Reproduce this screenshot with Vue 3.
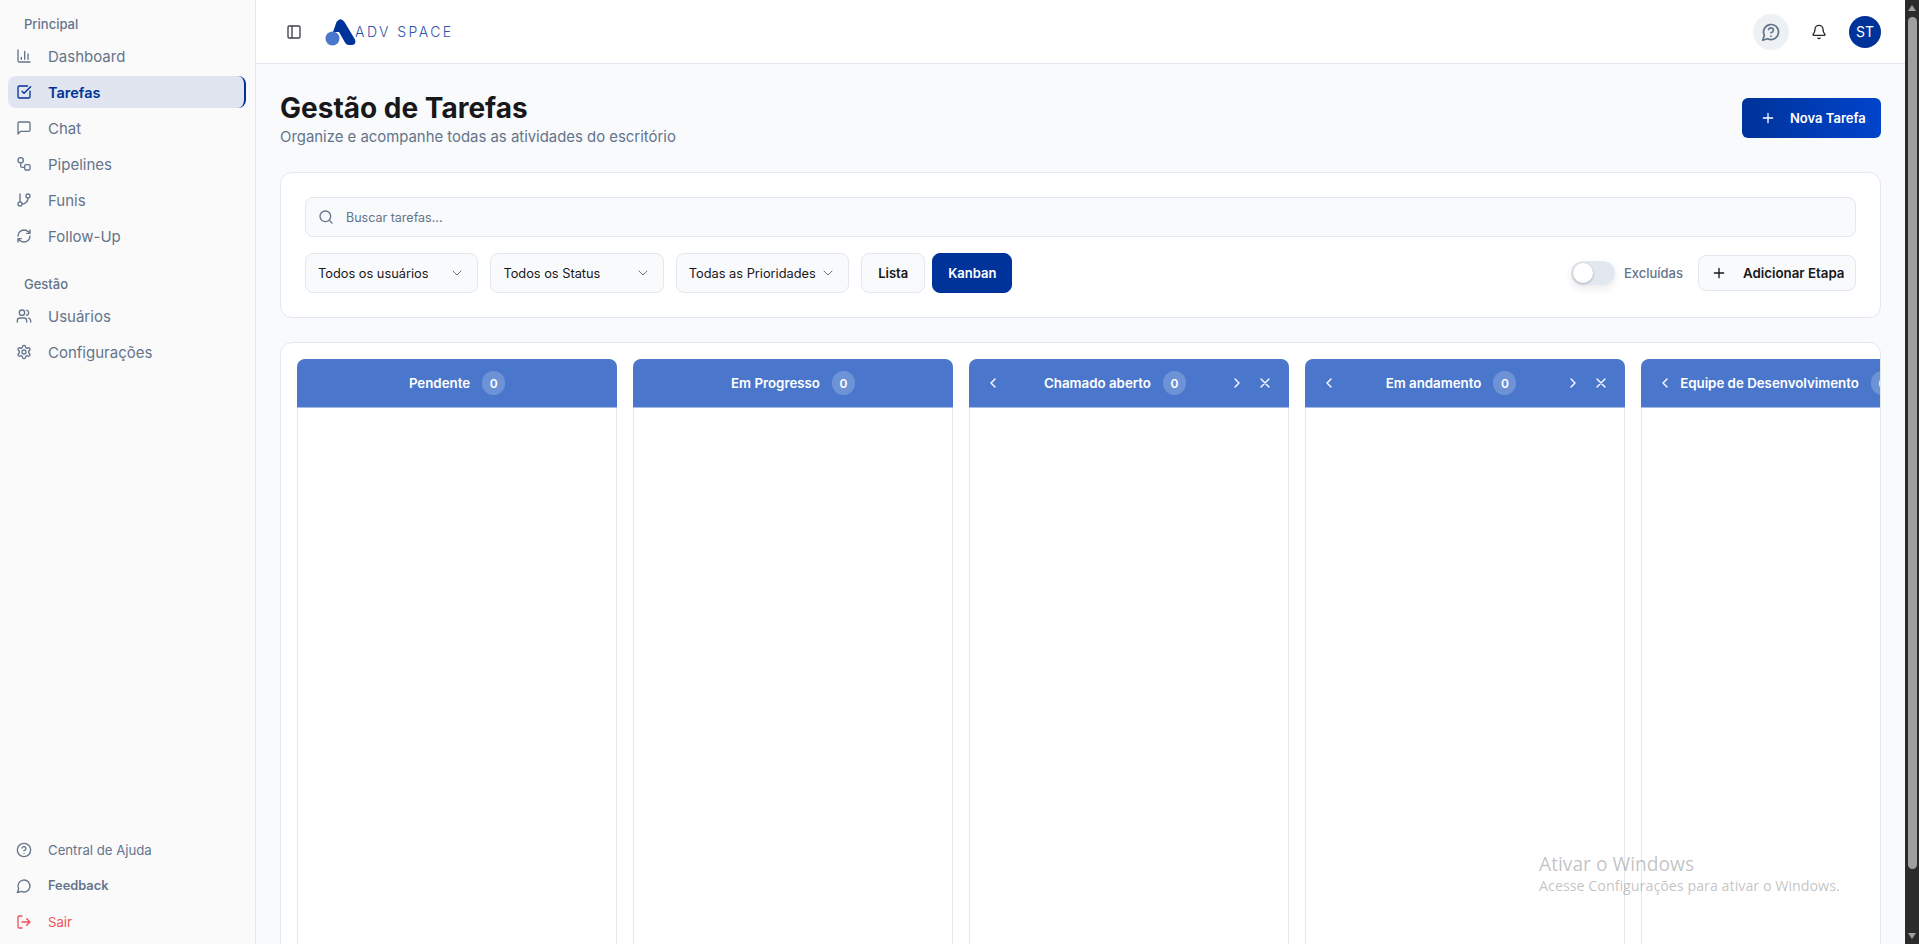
<script setup>
const mainMenu = [
  { label: 'Dashboard', icon: 'dashboard' },
  { label: 'Tarefas', icon: 'tasks', active: true },
  { label: 'Chat', icon: 'chat' },
  { label: 'Pipelines', icon: 'pipelines' },
  { label: 'Funis', icon: 'funnels' },
  { label: 'Follow-Up', icon: 'refresh' }
]

const adminMenu = [
  { label: 'Usuários', icon: 'users' },
  { label: 'Configurações', icon: 'settings' }
]

const filters = ['Todos os usuários', 'Todos os Status', 'Todas as Prioridades']

const columns = [
  { title: 'Pendente', count: 0 },
  { title: 'Em Progresso', count: 0 },
  { title: 'Chamado aberto', count: 0, custom: true },
  { title: 'Em andamento', count: 0, custom: true },
  { title: 'Equipe de Desenvolvimento', count: 0, custom: true }
]

// lucide style paths, drawn on a 24x24 box
const icons = {
  dashboard: 'M3 3v16a2 2 0 0 0 2 2h16M18 17V9M13 17V5M8 17v-3',
  tasks: 'M21 10.656V19a2 2 0 0 1-2 2H5a2 2 0 0 1-2-2V5a2 2 0 0 1 2-2h12.344M9 11l3 3L22 4',
  chat: 'M21 15a2 2 0 0 1-2 2H7l-4 4V5a2 2 0 0 1 2-2h14a2 2 0 0 1 2 2z',
  pipelines: 'M7 2.5a4 4 0 1 0 0 8 4 4 0 0 0 0-8zM7 10.5V15a2 2 0 0 0 2 2h4M15 13h4a2 2 0 0 1 2 2v4a2 2 0 0 1-2 2h-4a2 2 0 0 1-2-2v-4a2 2 0 0 1 2-2z',
  funnels: 'M6 3v12M18 3a3 3 0 1 0 0 6 3 3 0 0 0 0-6zM6 15a3 3 0 1 0 0 6 3 3 0 0 0 0-6zM18 9a9 9 0 0 1-9 9',
  refresh: 'M3 12a9 9 0 0 1 9-9 9.75 9.75 0 0 1 6.74 2.74L21 8M21 3v5h-5M21 12a9 9 0 0 1-9 9 9.75 9.75 0 0 1-6.74-2.74L3 16M8 16H3v5',
  users: 'M16 21v-2a4 4 0 0 0-4-4H6a4 4 0 0 0-4 4v2M9 3a4 4 0 1 0 0 8 4 4 0 0 0 0-8zM22 21v-2a4 4 0 0 0-3-3.87M16 3.13a4 4 0 0 1 0 7.75',
  settings: 'M12.22 2h-.44a2 2 0 0 0-2 2v.18a2 2 0 0 1-1 1.73l-.43.25a2 2 0 0 1-2 0l-.15-.08a2 2 0 0 0-2.73.73l-.22.38a2 2 0 0 0 .73 2.73l.15.1a2 2 0 0 1 1 1.72v.51a2 2 0 0 1-1 1.74l-.15.09a2 2 0 0 0-.73 2.73l.22.38a2 2 0 0 0 2.73.73l.15-.08a2 2 0 0 1 2 0l.43.25a2 2 0 0 1 1 1.73V20a2 2 0 0 0 2 2h.44a2 2 0 0 0 2-2v-.18a2 2 0 0 1 1-1.73l.43-.25a2 2 0 0 1 2 0l.15.08a2 2 0 0 0 2.73-.73l.22-.39a2 2 0 0 0-.73-2.73l-.15-.08a2 2 0 0 1-1-1.74v-.5a2 2 0 0 1 1-1.74l.15-.09a2 2 0 0 0 .73-2.73l-.22-.38a2 2 0 0 0-2.73-.73l-.15.08a2 2 0 0 1-2 0l-.43-.25a2 2 0 0 1-1-1.73V4a2 2 0 0 0-2-2zM12 9a3 3 0 1 0 0 6 3 3 0 0 0 0-6z',
  help: 'M12 2a10 10 0 1 0 0 20 10 10 0 0 0 0-20zM9.09 9a3 3 0 0 1 5.83 1c0 2-3 3-3 3M12 17h.01',
  feedback: 'M7.9 20A9 9 0 1 0 4 16.1L2 22Z',
  logout: 'M9 21H5a2 2 0 0 1-2-2V5a2 2 0 0 1 2-2h4M16 17l5-5-5-5M21 12H9',
  panel: 'M5 3h14a2 2 0 0 1 2 2v14a2 2 0 0 1-2 2H5a2 2 0 0 1-2-2V5a2 2 0 0 1 2-2zM9 3v18',
  chatHelp: 'M7.9 20A9 9 0 1 0 4 16.1L2 22ZM9.09 9a3 3 0 0 1 5.83 1c0 2-3 3-3 3M12 17h.01',
  bell: 'M10.268 21a2 2 0 0 0 3.464 0M3.262 15.326A1 1 0 0 0 4 17h16a1 1 0 0 0 .74-1.673C19.41 13.956 18 12.499 18 8A6 6 0 0 0 6 8c0 4.499-1.411 5.956-2.738 7.326',
  plus: 'M5 12h14M12 5v14',
  search: 'M11 3a8 8 0 1 0 0 16 8 8 0 0 0 0-16zM21 21l-4.3-4.3',
  down: 'm6 9 6 6 6-6',
  left: 'm15 18-6-6 6-6',
  right: 'm9 18 6-6-6-6',
  close: 'M18 6 6 18M6 6l12 12'
}
</script>

<template>
  <div class="page">
    <aside class="sidebar">
      <div class="menu-group">
        <div class="group-label">Principal</div>
        <a v-for="item in mainMenu" :key="item.label" class="menu-item" :class="{ active: item.active }">
          <svg class="icon" viewBox="0 0 24 24"><path :d="icons[item.icon]" /></svg>
          <span>{{ item.label }}</span>
        </a>
      </div>
      <div class="menu-group second">
        <div class="group-label">Gestão</div>
        <a v-for="item in adminMenu" :key="item.label" class="menu-item">
          <svg class="icon" viewBox="0 0 24 24"><path :d="icons[item.icon]" /></svg>
          <span>{{ item.label }}</span>
        </a>
      </div>
      <div class="menu-footer">
        <a class="menu-item small">
          <svg class="icon" viewBox="0 0 24 24"><path :d="icons.help" /></svg>
          <span>Central de Ajuda</span>
        </a>
        <a class="menu-item small strong">
          <svg class="icon" viewBox="0 0 24 24"><path :d="icons.feedback" /></svg>
          <span>Feedback</span>
        </a>
        <a class="menu-item small danger">
          <svg class="icon" viewBox="0 0 24 24"><path :d="icons.logout" /></svg>
          <span>Sair</span>
        </a>
      </div>
    </aside>

    <div class="main">
      <header class="topbar">
        <svg class="icon panel" viewBox="0 0 24 24"><path :d="icons.panel" /></svg>
        <div class="logo">
          <svg class="logo-mark" viewBox="0 0 32 28">
            <path class="logo-a" d="M11.500 4 Q15.500 -1.500 19.500 4 L30 21.500 Q31.500 26.500 27 27 L24 27 Q21.500 27 20 24.500 L14 14 L8 14 Z" />
            <circle class="logo-dot" cx="7.500" cy="20.500" r="7" />
          </svg>
          <span class="logo-text">ADV SPACE</span>
        </div>
        <div class="topbar-right">
          <div class="help-btn">
            <svg class="icon" viewBox="0 0 24 24"><path :d="icons.chatHelp" /></svg>
          </div>
          <svg class="icon bell" viewBox="0 0 24 24"><path :d="icons.bell" /></svg>
          <div class="avatar">ST</div>
        </div>
      </header>

      <main class="content">
        <div class="page-head">
          <div>
            <h1>Gestão de Tarefas</h1>
            <p>Organize e acompanhe todas as atividades do escritório</p>
          </div>
          <button class="btn-new">
            <svg class="icon" viewBox="0 0 24 24"><path :d="icons.plus" /></svg>
            Nova Tarefa
          </button>
        </div>

        <section class="card filters">
          <div class="search">
            <svg class="icon" viewBox="0 0 24 24"><path :d="icons.search" /></svg>
            <span>Buscar tarefas...</span>
          </div>
          <div class="filter-row">
            <div v-for="f in filters" :key="f" class="select">
              <span>{{ f }}</span>
              <svg class="icon" viewBox="0 0 24 24"><path :d="icons.down" /></svg>
            </div>
            <button class="btn-view">Lista</button>
            <button class="btn-view selected">Kanban</button>
            <div class="filter-right">
              <span class="toggle"><i></i></span>
              <span class="toggle-label">Excluídas</span>
              <button class="btn-stage">
                <svg class="icon" viewBox="0 0 24 24"><path :d="icons.plus" /></svg>
                Adicionar Etapa
              </button>
            </div>
          </div>
        </section>

        <section class="card board">
          <div v-for="col in columns" :key="col.title" class="column">
            <div class="column-head" :class="{ custom: col.custom }">
              <svg v-if="col.custom" class="icon" viewBox="0 0 24 24"><path :d="icons.left" /></svg>
              <div class="column-title">
                <span>{{ col.title }}</span>
                <span class="badge">{{ col.count }}</span>
              </div>
              <div v-if="col.custom" class="column-actions">
                <svg class="icon" viewBox="0 0 24 24"><path :d="icons.right" /></svg>
                <svg class="icon" viewBox="0 0 24 24"><path :d="icons.close" /></svg>
              </div>
            </div>
            <div class="column-body"></div>
          </div>
        </section>
      </main>
    </div>

    <div class="scrollbar">
      <span class="arrow up"></span>
      <span class="thumb"></span>
      <span class="arrow down"></span>
    </div>

    <div class="watermark">
      <div class="wm-title">Ativar o Windows</div>
      <div class="wm-sub">Acesse Configurações para ativar o Windows.</div>
    </div>
  </div>
</template>

<style>
html, body {
  margin: 0;
  height: 100%;
  overflow: hidden;
}
</style>

<style scoped>
.page {
  display: flex;
  height: 944px;
  overflow: hidden;
  font-family: Inter, "Liberation Sans", sans-serif;
  background: #f8fafc;
  position: relative;
}

.icon {
  width: 16px;
  height: 16px;
  flex: none;
  fill: none;
  stroke: currentColor;
  stroke-width: 2;
  stroke-linecap: round;
  stroke-linejoin: round;
}

/* sidebar */
.sidebar {
  width: 239px;
  flex: none;
  display: flex;
  flex-direction: column;
  background: #fafafa;
  border-right: 1px solid #e2e8f0;
  padding: 8px 8px 2.500px;
}

.group-label {
  height: 32px;
  line-height: 32px;
  padding-left: 16px;
  font-size: 13px;
  font-weight: 500;
  color: #64748b;
}

.menu-group.second {
  margin-top: 12px;
}

.menu-item {
  display: flex;
  align-items: center;
  gap: 16px;
  height: 32px;
  margin-bottom: 4px;
  padding-left: 8px;
  border-radius: 8px;
  font-size: 15px;
  color: #64748b;
  box-sizing: border-box;
}

.menu-item.active {
  background: #e0e5f0;
  color: #003399;
  font-weight: 600;
  font-size: 14.500px;
  border-right: 2px solid #003399;
  width: 238px;
}

.menu-item.small {
  font-size: 13.200px;
}

.menu-item.strong {
  font-size: 12.800px;
  font-weight: 600;
}

.menu-item.danger {
  color: #f0525a;
}

.menu-footer {
  margin-top: auto;
}

/* topbar */
.main {
  flex: 1;
  min-width: 0;
  display: flex;
  flex-direction: column;
}

.topbar {
  height: 63px;
  flex: none;
  display: flex;
  align-items: center;
  padding: 0 24px 0 30px;
  background: #fff;
  border-bottom: 1px solid #e2e8f0;
}

.panel {
  color: #3f3f46;
}

.logo {
  display: flex;
  align-items: center;
  margin-left: 23px;
}

.logo-mark {
  width: 32px;
  height: 28px;
  margin-top: 1px;
}

.logo-a {
  fill: #003399;
}

.logo-dot {
  fill: #4a77cc;
}

.logo-text {
  margin-left: -2px;
  font-size: 14px;
  font-weight: 300;
  letter-spacing: 2.450px;
  color: #2f55a8;
}

.topbar-right {
  margin-left: auto;
  display: flex;
  align-items: center;
}

.help-btn {
  width: 36px;
  height: 36px;
  border-radius: 50%;
  background: #eef1f4;
  display: flex;
  align-items: center;
  justify-content: center;
  color: #64748b;
}

.help-btn .icon {
  width: 20px;
  height: 20px;
}

.bell {
  margin: 0 22px;
  color: #27272a;
}

.avatar {
  width: 32px;
  height: 32px;
  border-radius: 50%;
  background: #003399;
  color: #fff;
  font-size: 14px;
  display: flex;
  align-items: center;
  justify-content: center;
}

/* content */
.content {
  flex: 1;
  min-height: 0;
  padding: 24px;
  display: flex;
  flex-direction: column;
  gap: 24px;
  overflow: hidden;
}

.page-head {
  display: flex;
  justify-content: space-between;
  align-items: center;
  height: 60px;
  flex: none;
}

h1 {
  margin: 0;
  font-size: 28px;
  line-height: 36px;
  font-weight: 700;
  color: #18181b;
}

.page-head p {
  margin: 1px 0 0;
  font-size: 14.900px;
  line-height: 20px;
  color: #64748b;
}

.btn-new {
  display: flex;
  align-items: center;
  gap: 14px;
  width: 139px;
  height: 40px;
  padding: 0 16px 0 18px;
  border: 0;
  border-radius: 6px;
  background: linear-gradient(90deg, #003399, #0044cc);
  color: #fff;
  font: 600 13px Inter, sans-serif;
  white-space: nowrap;
}

.card {
  background: #fff;
  border: 1px solid #e2e8f0;
  border-radius: 12px;
  flex: none;
}

.filters {
  padding: 24px;
  display: flex;
  flex-direction: column;
  gap: 16px;
}

.search {
  height: 40px;
  display: flex;
  align-items: center;
  gap: 12px;
  padding: 0 12px;
  background: #f8fafc;
  border: 1px solid #e2e8f0;
  border-radius: 8px;
  box-sizing: border-box;
  font-size: 12.500px;
  color: #64748b;
}

.search span {
  padding-top: 1px;
}

.filter-row {
  display: flex;
  align-items: center;
  height: 40px;
  gap: 12px;
}

.select {
  width: 173.400px;
  height: 40px;
  display: flex;
  align-items: center;
  justify-content: space-between;
  padding: 0 12px;
  background: #f8fafc;
  border: 1px solid #e2e8f0;
  border-radius: 8px;
  box-sizing: border-box;
  font-size: 12.800px;
  color: #18181b;
  white-space: nowrap;
}

.select .icon {
  color: #71717a;
  stroke-width: 1.500;
}

.btn-view {
  height: 40px;
  padding: 0 16px;
  background: #f8fafc;
  border: 1px solid #e2e8f0;
  border-radius: 8px;
  font: 600 13px Inter, sans-serif;
  color: #18181b;
}

.btn-view.selected {
  margin-left: -5px;
  padding: 0 15px;
  background: #003399;
  border-color: #003399;
  color: #fff;
}

.filter-right {
  margin-left: auto;
  display: flex;
  align-items: center;
}

.toggle {
  width: 44px;
  height: 24px;
  border-radius: 12px;
  background: #e2e8f0;
  padding: 2px;
  box-sizing: border-box;
  box-shadow: 0 4px 8px rgba(0, 0, 0, 0.08);
}

.toggle i {
  display: block;
  width: 20px;
  height: 20px;
  border-radius: 50%;
  background: #fff;
  box-shadow: 0 1px 3px rgba(0, 0, 0, 0.25);
}

.toggle-label {
  margin: 0 15px 0 9px;
  font-size: 13px;
  font-weight: 500;
  color: #64748b;
}

.btn-stage {
  height: 36px;
  width: 158px;
  display: flex;
  align-items: center;
  gap: 16px;
  padding: 0 12px;
  background: #f8fafc;
  border: 1px solid #e2e8f0;
  border-radius: 8px;
  font: 600 13.300px Inter, sans-serif;
  color: #18181b;
  white-space: nowrap;
}

/* kanban */
.board {
  flex: 1 0 auto;
  display: flex;
  gap: 16px;
  padding: 16px 0 0 16px;
  overflow: hidden;
  margin-bottom: -200px;
}

.column {
  width: 320px;
  flex: none;
  display: flex;
  flex-direction: column;
}

.column-head {
  height: 49px;
  flex: none;
  display: flex;
  align-items: center;
  justify-content: center;
  padding: 0 16px;
  background: #4a77cc;
  border-bottom: 1px solid #a3bbe6;
  border-radius: 8px 8px 0 0;
  color: #fff;
  box-sizing: border-box;
}

.column-head.custom {
  justify-content: space-between;
}

.column-title {
  display: flex;
  align-items: center;
  gap: 12px;
  font-size: 13.300px;
  font-weight: 600;
  white-space: nowrap;
}

.badge {
  width: 23px;
  height: 24px;
  border-radius: 12px;
  background: rgba(255, 255, 255, 0.2);
  display: flex;
  align-items: center;
  justify-content: center;
  font-size: 12px;
}

.column-actions {
  display: flex;
  gap: 12px;
}

.column-body {
  flex: 1;
  background: #fff;
  border: 1px solid #e2e8f0;
  border-top: 0;
}

/* browser scrollbar, part of the picture */
.scrollbar {
  width: 14px;
  flex: none;
  background: #2b2b2b;
  display: flex;
  flex-direction: column;
  align-items: center;
  padding: 5px 0;
  box-sizing: border-box;
}

.thumb {
  flex: 1;
  width: 9px;
  margin: 6px 0 64px;
  border-radius: 5px;
  background: #9f9f9f;
}

.arrow {
  width: 0;
  height: 0;
  border-left: 4.500px solid transparent;
  border-right: 4.500px solid transparent;
}

.arrow.up {
  border-bottom: 6px solid #9f9f9f;
}

.arrow.down {
  border-top: 6px solid #9f9f9f;
}

.watermark {
  position: absolute;
  left: 1539px;
  top: 851px;
  font-family: "Open Sans", sans-serif;
  color: rgba(110, 110, 110, 0.42);
  pointer-events: none;
  white-space: nowrap;
}

.wm-title {
  font-size: 19.200px;
  line-height: 25px;
}

.wm-sub {
  font-size: 14.300px;
  line-height: 19px;
}
</style>
